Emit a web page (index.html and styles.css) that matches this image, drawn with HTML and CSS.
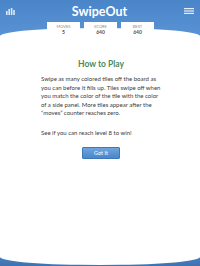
FILE: index.html
```html
<!DOCTYPE html>
<html>
<head>
<meta charset="utf-8">
<link rel="stylesheet" href="styles.css">
</head>
<body>
<div class="app">
  <div class="topbar">
    <svg class="icon" width="9" height="7" viewBox="0 0 9 7">
      <rect x="0" y="3" width="1.6" height="4" fill="#dbe8f6"/>
      <rect x="2.4" y="1" width="1.6" height="6" fill="#dbe8f6"/>
      <rect x="4.8" y="0" width="1.6" height="7" fill="#dbe8f6"/>
      <rect x="7.2" y="2" width="1.6" height="5" fill="#dbe8f6"/>
    </svg>
    <div class="title">SwipeOut</div>
    <svg class="icon" width="10" height="6" viewBox="0 0 10 6">
      <rect x="0" y="0" width="10" height="1.2" fill="#e6eef8"/>
      <rect x="0" y="2.4" width="10" height="1.2" fill="#e6eef8"/>
      <rect x="0" y="4.8" width="10" height="1.2" fill="#e6eef8"/>
    </svg>
  </div>
  <div class="stats">
    <div class="tab"><div class="label">MOVES</div><div class="value">5</div></div>
    <div class="tab"><div class="label">SCORE</div><div class="value">640</div></div>
    <div class="tab"><div class="label">BEST</div><div class="value">640</div></div>
  </div>
  <div class="main">
    <h1 class="heading">How to Play</h1>
    <p class="text">Swipe as many colored tiles off the board as you can before it fills up. Tiles swipe off when you match the color of the tile with the color of a side panel. More tiles appear after the “moves” counter reaches zero.</p>
    <p class="text">See if you can reach level 8 to win!</p>
    <div class="actions"><button class="btn">Got It</button></div>
  </div>
</div>
</body>
</html>
```
FILE: styles.css
```css
html, body {
  margin: 0;
  padding: 0;
}
body {
  width: 200px;
  height: 266px;
  overflow: hidden;
  font-family: Lato, "Open Sans", sans-serif;
}
.app {
  height: 266px;
  display: flex;
  flex-direction: column;
  background: linear-gradient(to bottom, #4a85c9 0px, #5993d4 36px, #5993d4 240px, #3f73b2 266px);
}
.topbar {
  height: 22px;
  display: flex;
  align-items: center;
  justify-content: space-between;
  padding: 0 6px;
}
.icon {
  display: block;
}
.title {
  color: #ffffff;
  font-weight: 700;
  font-size: 12.5px;
  line-height: 16px;
  padding-top: 1px;
}
.stats {
  position: relative;
  z-index: 1;
  display: flex;
  justify-content: center;
  gap: 4px;
  padding-left: 1px;
}
.tab {
  width: 33px;
  height: 16px;
  background: #ffffff;
  text-align: center;
}
.label {
  font-size: 4px;
  line-height: 5px;
  padding-top: 2px;
  color: #8a8a8a;
}
.value {
  font-size: 5px;
  line-height: 7px;
  font-weight: 700;
  color: #555555;
}
.main {
  flex: 1;
  margin-top: -10px;
  margin-bottom: 1px;
  background: #ffffff;
  border-radius: 50% 50% 50% 50% / 8px 8px 8px 8px;
  padding: 31px 39px 0 41px;
}
.heading {
  margin: 0;
  text-align: center;
  font-size: 8.5px;
  line-height: 10px;
  font-weight: 700;
  color: #4a8a5e;
}
.text {
  margin: 6px 0 0;
  font-size: 6px;
  line-height: 8.6px;
  color: #3c3c3c;
}
.text + .text {
  margin-top: 10.8px;
}
.actions {
  display: flex;
  justify-content: center;
  margin-top: 10px;
}
.btn {
  width: 38px;
  height: 12px;
  padding: 0;
  border: 1px solid #3f78ba;
  border-radius: 1px;
  background: linear-gradient(to bottom, #70a4dc, #4a86ca);
  color: #ffffff;
  font-family: Lato, "Open Sans", sans-serif;
  font-size: 5.5px;
  line-height: 10px;
}
```
